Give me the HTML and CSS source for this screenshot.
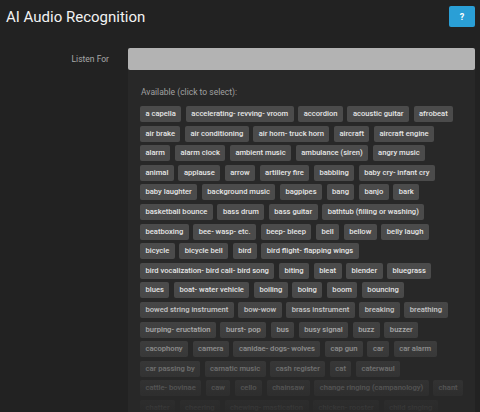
FILE: index.html
```html
<!DOCTYPE html>
<html lang="en">
  <head>
    <meta charset="UTF-8" />
    <meta name="viewport" content="width=device-width, initial-scale=1.0" />
    <title>AI Audio Recognition</title>
    <link rel="stylesheet" href="styles.css">
  </head>
  <body>
    <header class="topbar">
      <h1 class="title">AI Audio Recognition</h1>
      <button class="help-btn" type="button">?</button>
    </header>
    <main>
      <div class="form-row">
        <label class="form-label" for="listen">Listen For</label>
        <input class="form-input" id="listen" type="text" />
      </div>
      <section class="available">
        <p class="available-title">Available (click to select):</p>
        <div class="tags">
          <div class="tag-row">
            <span class="tag">a capella</span>
            <span class="tag">accelerating- revving- vroom</span>
            <span class="tag">accordion</span>
            <span class="tag">acoustic guitar</span>
            <span class="tag">afrobeat</span>
          </div>
          <div class="tag-row">
            <span class="tag">air brake</span>
            <span class="tag">air conditioning</span>
            <span class="tag">air horn- truck horn</span>
            <span class="tag">aircraft</span>
            <span class="tag">aircraft engine</span>
          </div>
          <div class="tag-row">
            <span class="tag">alarm</span>
            <span class="tag">alarm clock</span>
            <span class="tag">ambient music</span>
            <span class="tag">ambulance (siren)</span>
            <span class="tag">angry music</span>
          </div>
          <div class="tag-row">
            <span class="tag">animal</span>
            <span class="tag">applause</span>
            <span class="tag">arrow</span>
            <span class="tag">artillery fire</span>
            <span class="tag">babbling</span>
            <span class="tag">baby cry- infant cry</span>
          </div>
          <div class="tag-row">
            <span class="tag">baby laughter</span>
            <span class="tag">background music</span>
            <span class="tag">bagpipes</span>
            <span class="tag">bang</span>
            <span class="tag">banjo</span>
            <span class="tag">bark</span>
          </div>
          <div class="tag-row">
            <span class="tag">basketball bounce</span>
            <span class="tag">bass drum</span>
            <span class="tag">bass guitar</span>
            <span class="tag">bathtub (filling or washing)</span>
          </div>
          <div class="tag-row">
            <span class="tag">beatboxing</span>
            <span class="tag">bee- wasp- etc.</span>
            <span class="tag">beep- bleep</span>
            <span class="tag">bell</span>
            <span class="tag">bellow</span>
            <span class="tag">belly laugh</span>
          </div>
          <div class="tag-row">
            <span class="tag">bicycle</span>
            <span class="tag">bicycle bell</span>
            <span class="tag">bird</span>
            <span class="tag">bird flight- flapping wings</span>
          </div>
          <div class="tag-row">
            <span class="tag">bird vocalization- bird call- bird song</span>
            <span class="tag">biting</span>
            <span class="tag">bleat</span>
            <span class="tag">blender</span>
            <span class="tag">bluegrass</span>
          </div>
          <div class="tag-row">
            <span class="tag">blues</span>
            <span class="tag">boat- water vehicle</span>
            <span class="tag">boiling</span>
            <span class="tag">boing</span>
            <span class="tag">boom</span>
            <span class="tag">bouncing</span>
          </div>
          <div class="tag-row">
            <span class="tag">bowed string instrument</span>
            <span class="tag">bow-wow</span>
            <span class="tag">brass instrument</span>
            <span class="tag">breaking</span>
            <span class="tag">breathing</span>
          </div>
          <div class="tag-row">
            <span class="tag">burping- eructation</span>
            <span class="tag">burst- pop</span>
            <span class="tag">bus</span>
            <span class="tag">busy signal</span>
            <span class="tag">buzz</span>
            <span class="tag">buzzer</span>
          </div>
          <div class="tag-row">
            <span class="tag">cacophony</span>
            <span class="tag">camera</span>
            <span class="tag">canidae- dogs- wolves</span>
            <span class="tag">cap gun</span>
            <span class="tag">car</span>
            <span class="tag">car alarm</span>
          </div>
          <div class="tag-row">
            <span class="tag">car passing by</span>
            <span class="tag">carnatic music</span>
            <span class="tag">cash register</span>
            <span class="tag">cat</span>
            <span class="tag">caterwaul</span>
          </div>
          <div class="tag-row">
            <span class="tag">cattle- bovinae</span>
            <span class="tag">caw</span>
            <span class="tag">cello</span>
            <span class="tag">chainsaw</span>
            <span class="tag">change ringing (campanology)</span>
            <span class="tag">chant</span>
          </div>
          <div class="tag-row">
            <span class="tag">chatter</span>
            <span class="tag">cheering</span>
            <span class="tag">chewing- mastication</span>
            <span class="tag">chicken- rooster</span>
            <span class="tag">child singing</span>
          </div>
        </div>
      </section>
    </main>
  </body>
</html>
```

FILE: styles.css
```css
* {
  box-sizing: border-box;
}
html,
body {
  margin: 0;
  padding: 0;
  height: 100%;
  overflow: hidden;
}
body {
  background: #222222;
  color: #e6e6e6;
  font-family: Roboto, "Liberation Sans", Arial, sans-serif;
  padding: 0 5px 0 6px;
}
.topbar {
  display: flex;
  justify-content: space-between;
  align-items: flex-start;
  height: 48px;
  padding-top: 6px;
}
.title {
  margin: 0;
  padding-top: 2px;
  font-size: 15px;
  font-weight: 400;
  line-height: 18px;
  color: #f2f2f2;
}
.help-btn {
  width: 26px;
  height: 21px;
  padding: 0;
  border: none;
  border-radius: 2px;
  background: #2a9fd6;
  color: #fff;
  font-family: inherit;
  font-size: 9px;
  font-weight: 700;
  cursor: pointer;
}
.form-row {
  display: flex;
  align-items: center;
  height: 22px;
}
.form-label {
  width: 122px;
  padding-right: 19px;
  text-align: right;
  font-size: 8.5px;
  color: #a8a8a8;
}
.form-input {
  flex: 1;
  height: 22px;
  border: none;
  border-radius: 2px;
  background: #b3b3b3;
}
.available {
  position: relative;
  margin-left: 122px;
  height: 342px;
  overflow: hidden;
  background: #282828;
  padding: 17px 12px 0;
}
.available::after {
  content: "";
  position: absolute;
  left: 0;
  right: 0;
  bottom: 0;
  height: 125px;
  background: linear-gradient(to bottom, rgba(40, 40, 40, 0), rgba(40, 40, 40, 0.96));
}
.available-title {
  margin: 0 0 9px 1px;
  font-size: 8.5px;
  line-height: 10px;
  color: #a0a0a0;
}
.tags {
  display: flex;
  flex-direction: column;
  gap: 3.6px;
}
.tag-row {
  display: flex;
  gap: 4.5px;
}
.tag {
  height: 16px;
  padding: 0 5.5px;
  border-radius: 2px;
  background: #4b4b4b;
  color: #e6e6e6;
  font-size: 7.6px;
  font-weight: 500;
  line-height: 16px;
  white-space: nowrap;
  cursor: pointer;
}
```
